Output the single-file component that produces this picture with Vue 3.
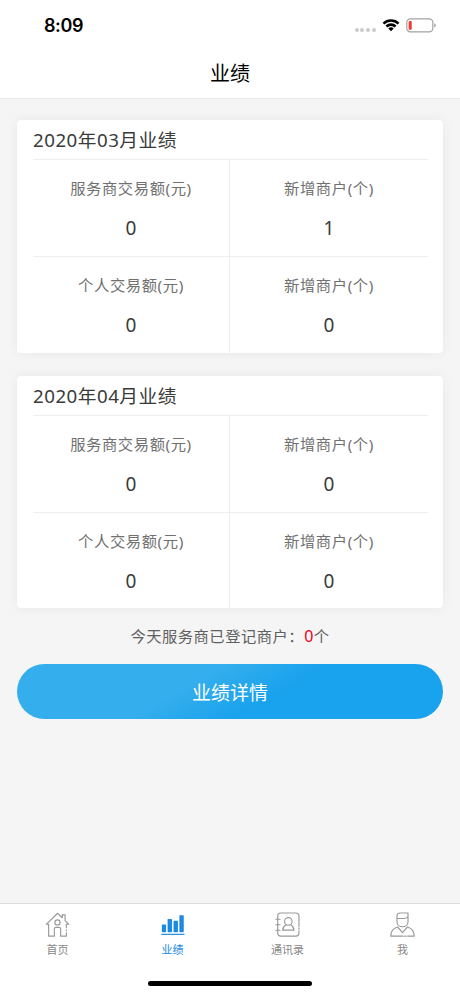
<template>
  <div class="page">
    <header class="top">
      <div class="status">
        <span class="time">8:09</span>
        <div class="status-icons">
          <div class="signal"><i v-for="n in 4" :key="n"></i></div>
          <svg class="wifi" width="18" height="14" viewBox="0 0 18 14">
            <path d="M0.6 4.7A12 12 0 0 1 17.4 4.7L15.7 6.4A9.6 9.6 0 0 0 2.3 6.4Z" />
            <path d="M3.5 7.6A7.9 7.9 0 0 1 14.5 7.6L12.7 9.4A5.3 5.3 0 0 0 5.3 9.4Z" />
            <path d="M6.3 10.5A4 4 0 0 1 11.7 10.5L9 13.3Z" />
          </svg>
          <svg class="battery" width="30" height="15" viewBox="0 0 30 15">
            <rect x="0.8" y="0.8" width="26" height="13" rx="3.6" fill="#fff" stroke="#a3a3a3" stroke-width="1.2" />
            <rect x="2.7" y="2.9" width="3" height="8.8" rx="1" fill="#f5362c" />
            <path d="M28.2 5.2Q29.8 5.8 29.8 7.3T28.2 9.4Z" fill="#a3a3a3" />
          </svg>
        </div>
      </div>
      <h1 class="nav-title">业绩</h1>
    </header>

    <main class="content">
      <section v-for="card in cards" :key="card.title" class="card">
        <h2 class="card-title">{{ card.title }}</h2>
        <div class="grid">
          <div v-for="(item, i) in card.items" :key="i" class="cell">
            <div class="label">{{ item.label }}</div>
            <div class="value">{{ item.value }}</div>
          </div>
        </div>
      </section>
      <p class="today">今天服务商已登记商户：<span class="red">{{ todayCount }}</span>个</p>
      <button class="detail-btn">业绩详情</button>
    </main>

    <footer class="bottom">
      <nav class="tabs">
        <a v-for="tab in tabs" :key="tab.name" class="tab" :class="{ active: tab.name === current }" @click="current = tab.name">
          <svg v-if="tab.name === 'home'" class="icon" viewBox="0 0 24 24">
            <path d="M3.5 11.8H1.2L12 1.2L16.6 5.5V2.7H19.3V8.2L22.9 11.8H20.5V15" />
            <path d="M3.5 11.8V23.2H9V16.2Q9 14.8 10.4 14.8H13.6Q15 14.8 15 16.2V23.2H20.5V19.8M20.5 17V18" />
            <circle cx="12" cy="10" r="2.5" />
          </svg>
          <svg v-else-if="tab.name === 'stats'" class="icon solid" viewBox="0 0 24 24">
            <rect x="1.8" y="12" width="4" height="7.4" rx="0.7" />
            <rect x="7.3" y="6.6" width="4.2" height="12.8" rx="0.7" />
            <rect x="13" y="8.5" width="4.2" height="10.9" rx="0.7" />
            <rect x="18.6" y="3" width="4.2" height="16.4" rx="0.7" />
            <rect x="1.2" y="20.9" width="22.3" height="1.1" />
          </svg>
          <svg v-else-if="tab.name === 'contacts'" class="icon" viewBox="0 0 24 24">
            <path d="M23 14V4Q23 1 20 1H5.5Q2.6 1 2.6 4V20Q2.6 23.2 5.5 23.2H20Q23 23.2 23 20V18M23 15.5V16.5" />
            <path d="M0.8 7H4.8M0.8 12.2H4.8M0.8 17.5H4.8" />
            <circle cx="12.8" cy="9" r="3.6" />
            <path d="M10.5 12.2Q7.4 14 7.4 17.4H18.2Q18.2 14 15.1 12.2" />
          </svg>
          <svg v-else class="icon" viewBox="0 0 24 24">
            <path d="M6.7 6.2V4Q6.7 1 9.7 1H17.3V6.2V9C17.3 12.2 15 14.2 12 14.2S6.7 12.2 6.7 9V6.2H14Q16 6 17.3 4.3" />
            <path d="M7.2 14.4Q0.8 16.3 0.8 23.2H12.5M14 23.2H15.5M17 23.2H23.2Q23.2 16.3 16.8 14.4L12 19.7L7.2 14.4" />
          </svg>
          <span class="tab-text">{{ tab.text }}</span>
        </a>
      </nav>
      <div class="home-bar"></div>
    </footer>
  </div>
</template>

<script setup>
import { ref } from 'vue';

const current = ref('stats');
const todayCount = ref(0);

const cards = ref([
  {
    title: '2020年03月业绩',
    items: [
      { label: '服务商交易额(元)', value: 0 },
      { label: '新增商户(个)', value: 1 },
      { label: '个人交易额(元)', value: 0 },
      { label: '新增商户(个)', value: 0 },
    ],
  },
  {
    title: '2020年04月业绩',
    items: [
      { label: '服务商交易额(元)', value: 0 },
      { label: '新增商户(个)', value: 0 },
      { label: '个人交易额(元)', value: 0 },
      { label: '新增商户(个)', value: 0 },
    ],
  },
]);

const tabs = [
  { name: 'home', text: '首页' },
  { name: 'stats', text: '业绩' },
  { name: 'contacts', text: '通讯录' },
  { name: 'me', text: '我' },
];
</script>

<style>
body {
  background: #f5f5f5;
}
</style>

<style scoped>
.page {
  display: flex;
  flex-direction: column;
  height: 996px;
  overflow: hidden;
  background: #f5f5f5;
  font-family: "Noto Sans", "Noto Sans CJK SC", sans-serif;
  color: #3a3a3a;
}

.page * {
  box-sizing: border-box;
}

.top {
  height: 99px;
  flex: none;
  background: #fff;
  border-bottom: 1px solid #ebebeb;
}

.status {
  display: flex;
  justify-content: space-between;
  height: 50px;
  padding: 0 24px 0 44px;
}

.time {
  line-height: 52px;
  font-family: Inter, sans-serif;
  font-size: 18px;
  font-weight: 600;
  letter-spacing: -0.4px;
  color: #000;
}

.status-icons {
  display: flex;
  align-items: center;
}

.signal {
  display: flex;
  gap: 1.8px;
  margin: 10px 6px 0 0;
}

.signal i {
  width: 4px;
  height: 4px;
  border-radius: 50%;
  background: #ccc;
}

.wifi {
  margin-right: 6px;
}

.nav-title {
  margin: 0;
  line-height: 48px;
  text-align: center;
  font-size: 20px;
  font-weight: 400;
  color: #000;
}

.content {
  flex: 1;
  padding: 21px 17px 0;
}

.card {
  height: 233px;
  margin-bottom: 23px;
  padding: 0 15px 0 16px;
  border-radius: 4px;
  background: #fff;
  box-shadow: 0 0 12px rgba(0, 0, 0, 0.06);
}

.card + .card {
  height: 232px;
  margin-bottom: 0;
}

.card-title {
  height: 40px;
  margin: 0;
  border-bottom: 1px solid #eee;
  line-height: 39px;
  font-size: 18.7px;
  font-weight: 400;
  letter-spacing: 0.5px;
}

.grid {
  display: grid;
  grid-template-columns: 197px 1fr;
  grid-template-rows: 97px 96px;
}

.cell {
  padding-top: 13px;
  text-align: center;
}

.cell:nth-child(odd) {
  border-right: 1px solid #eee;
}

.cell:nth-child(-n + 2) {
  border-bottom: 1px solid #eee;
}

.label {
  height: 30px;
  line-height: 30px;
  font-size: 15.3px;
  letter-spacing: 0.6px;
  color: #707070;
}

.value {
  margin-top: 10px;
  line-height: 30px;
  font-size: 19px;
}

.today {
  margin: 13px 0;
  line-height: 30px;
  text-align: center;
  font-size: 15.3px;
  letter-spacing: 0.5px;
  color: #606060;
}

.red {
  font-size: 16px;
  color: #f00018;
}

.detail-btn {
  display: block;
  width: 100%;
  height: 55px;
  padding: 0;
  border: 0;
  border-radius: 28px;
  background: linear-gradient(150deg, #34aeed 0%, #34aeed 40%, #19a2ed 60%, #19a2ed 100%);
  font: inherit;
  font-size: 19px;
  color: #fff;
}

.bottom {
  height: 93px;
  flex: none;
  border-top: 1px solid #dcdcdc;
  background: #fff;
}

.tabs {
  display: flex;
  height: 77px;
}

.tab {
  display: flex;
  flex: 1;
  flex-direction: column;
  align-items: center;
  padding-top: 8px;
  color: #888;
}

.tab.active {
  color: #1a8ae2;
}

.icon {
  width: 25px;
  height: 25px;
  fill: none;
  stroke: #999;
  stroke-width: 1.1;
  stroke-linecap: round;
  stroke-linejoin: round;
}

.icon.solid {
  fill: currentColor;
  stroke: none;
}

.tab-text {
  margin-top: 4px;
  line-height: 18px;
  font-size: 11px;
}

.home-bar {
  width: 164px;
  height: 5px;
  margin: 0 auto;
  border-radius: 3px;
  background: #000;
}
</style>
